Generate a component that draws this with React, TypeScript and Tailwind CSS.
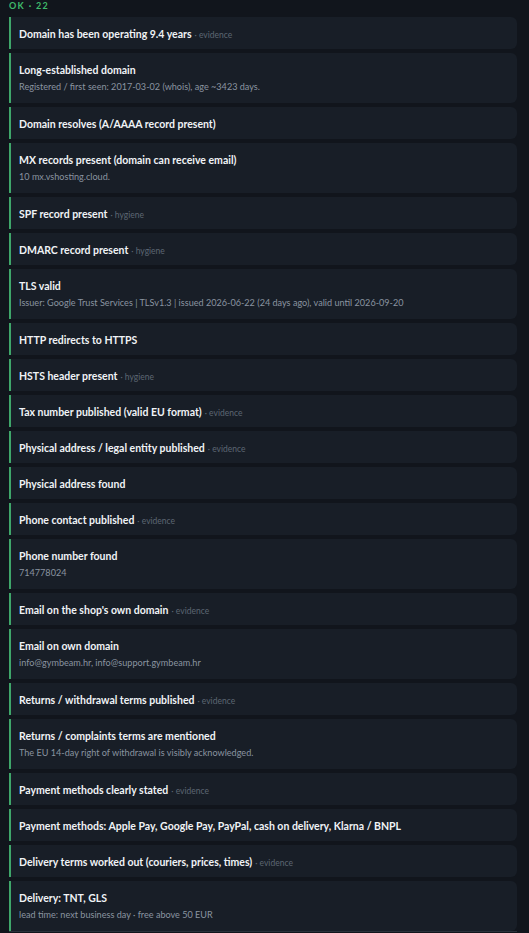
import React from "react";

type Check = { title: string; tag?: string; detail?: string };

const checks: Check[] = [
  { title: "Domain has been operating 9.4 years", tag: "evidence" },
  { title: "Long-established domain", detail: "Registered / first seen: 2017-03-02 (whois), age ~3423 days." },
  { title: "Domain resolves (A/AAAA record present)" },
  { title: "MX records present (domain can receive email)", detail: "10 mx.vshosting.cloud." },
  { title: "SPF record present", tag: "hygiene" },
  { title: "DMARC record present", tag: "hygiene" },
  { title: "TLS valid", detail: "Issuer: Google Trust Services | TLSv1.3 | issued 2026-06-22 (24 days ago), valid until 2026-09-20" },
  { title: "HTTP redirects to HTTPS" },
  { title: "HSTS header present", tag: "hygiene" },
  { title: "Tax number published (valid EU format)", tag: "evidence" },
  { title: "Physical address / legal entity published", tag: "evidence" },
  { title: "Physical address found" },
  { title: "Phone contact published", tag: "evidence" },
  { title: "Phone number found", detail: "714778024" },
  { title: "Email on the shop's own domain", tag: "evidence" },
  { title: "Email on own domain", detail: "info@gymbeam.hr, info@support.gymbeam.hr" },
  { title: "Returns / withdrawal terms published", tag: "evidence" },
  { title: "Returns / complaints terms are mentioned", detail: "The EU 14-day right of withdrawal is visibly acknowledged." },
  { title: "Payment methods clearly stated", tag: "evidence" },
  { title: "Payment methods: Apple Pay, Google Pay, PayPal, cash on delivery, Klarna / BNPL" },
  { title: "Delivery terms worked out (couriers, prices, times)", tag: "evidence" },
  { title: "Delivery: TNT, GLS", detail: "lead time: next business day · free above 50 EUR" },
];

function CheckRow({ c }: { c: Check }) {
  return (
    <div className="border-l-2 border-[#3fa66a] bg-[#181e27] rounded-r-md pl-[8px] pr-3 pt-[7px] pb-[9px]">
      <div className="h-[16px] leading-[16px] whitespace-nowrap">
        <span className="text-[10.5px] font-bold text-[#f0f3f6]">{c.title}</span>
        {c.tag && (
          <span className="ml-[3px] text-[8.5px] text-[#5d6773]">· {c.tag}</span>
        )}
      </div>
      {c.detail && (
        <div className="mt-[4px] h-[14px] text-[9.1px] leading-[14px] text-[#8a94a0] whitespace-nowrap">{c.detail}</div>
      )}
    </div>
  );
}

export default function App() {
  return (
    <div
      className="min-h-[933px] w-full bg-[#11151c] pl-[9px] pr-[12px]"
      style={{ fontFamily: 'Lato, "Noto Sans", Arial, sans-serif' }}
    >
      <div className="h-[17px] text-[9px] font-bold tracking-[0.15em] text-[#3fb96a] leading-[11px]">
        OK · 22
      </div>
      <div className="flex flex-col gap-[4px] border-b border-[#2a313b]">
        {checks.map((c, i) => (
          <CheckRow key={i} c={c} />
        ))}
      </div>
    </div>
  );
}
